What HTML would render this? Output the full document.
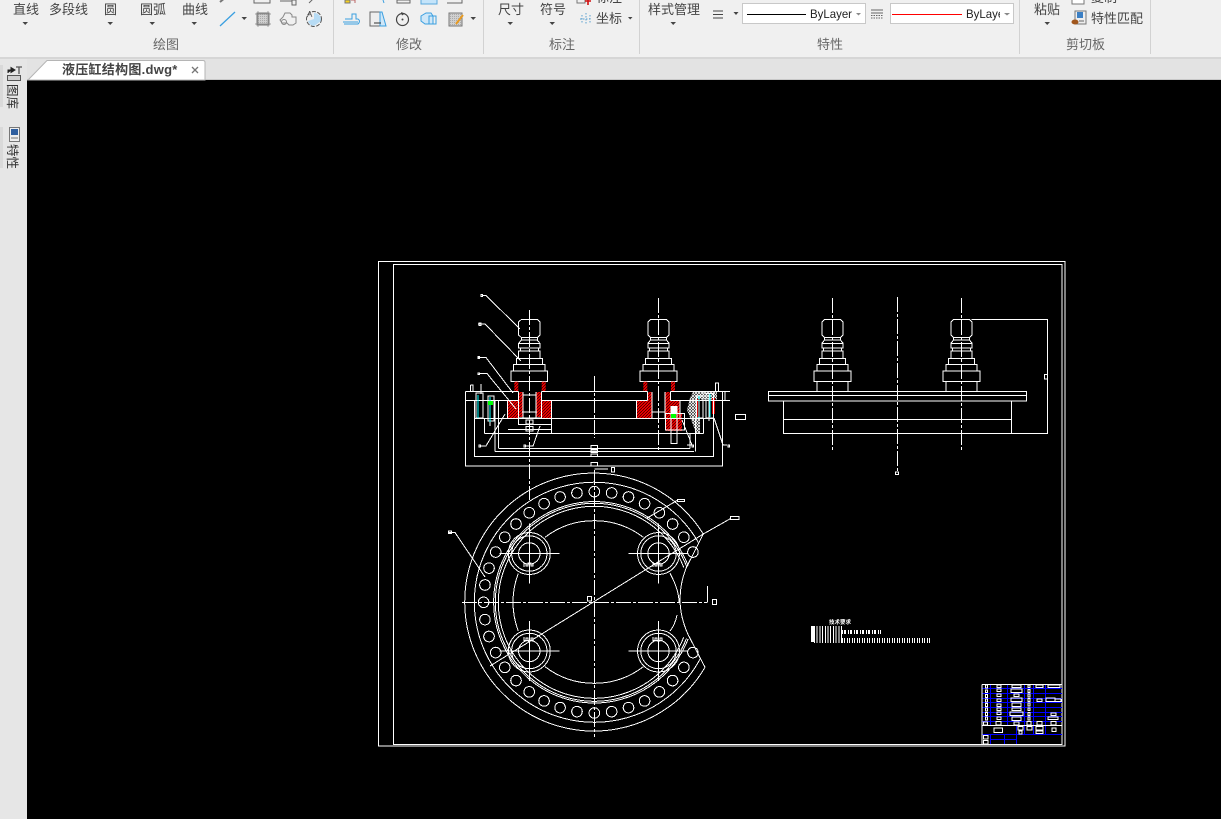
<!DOCTYPE html>
<html><head><meta charset="utf-8"><title>液压缸结构图.dwg</title>
<style>
html,body{margin:0;padding:0;background:#000;width:1221px;height:819px;overflow:hidden}
svg{display:block}
text{font-family:"Liberation Sans","Noto Sans CJK SC",sans-serif}
.l{font-size:13px;fill:#444}
.g{font-size:13px;fill:#666}
.d{stroke:#fff;fill:none;shape-rendering:crispEdges}
.c{stroke-dasharray:15 2 3 2}
.b{stroke:#00f;fill:none;shape-rendering:crispEdges}
.i{fill:none;stroke:#666;stroke-width:1}
.u{fill:none;stroke:#3a9fe0;stroke-width:1}
</style></head><body>
<svg width="1221" height="819" viewBox="0 0 1221 819" xmlns="http://www.w3.org/2000/svg">
<defs>
<pattern id="rh" width="3" height="3" patternUnits="userSpaceOnUse"><rect width="3" height="3" fill="#f00000"/><path d="M0 3L3 0" stroke="#000" stroke-width=".6"/></pattern>
<pattern id="wh" width="3" height="3" patternUnits="userSpaceOnUse"><rect width="3" height="3" fill="#000"/><path d="M0 3L3 0M0 0L3 3" stroke="#fff" stroke-width=".8"/></pattern>
<pattern id="gh" width="2" height="2" patternUnits="userSpaceOnUse"><rect width="2" height="2" fill="#d0d0d0"/><rect width="1" height="1" fill="#aaa"/></pattern>
<g id="knob" class="d">
<path d="M-8 319.5H8L10.7 322V335L8 337.5H-8L-10.7 335V322Z"/>
<path d="M-8 337.5V340H8V337.5M-8 340L-10.7 343.5M8 340L10.7 343.5"/>
<rect x="-10.7" y="343.5" width="21.4" height="4.5"/><path d="M-9 348V351M9 348V351"/>
<rect x="-10.7" y="351" width="21.4" height="7.5"/>
<rect x="-13" y="358.5" width="26" height="6"/>
<rect x="-15.7" y="364.5" width="31.4" height="6.5"/>
<rect x="-18.3" y="371" width="36.6" height="10.5"/>
</g>
<circle id="h" cx="594.3" cy="491.6" r="5.3" class="d"/>
<g id="bolt" class="d"><circle r="21"/><circle r="17.7"/><circle r="10.7"/><path d="M-30 0H30M0 -30V30"/></g>
</defs>

<!-- chrome -->
<rect width="1221" height="57" fill="#f0f0f0"/>
<rect y="57" width="1221" height="2" fill="#d6d6d6"/>
<rect y="59" width="1221" height="21" fill="#e3e3e3"/>
<rect y="79" width="1221" height="1" fill="#c8c8c8"/>
<rect y="59" width="27" height="760" fill="#e6e6e6"/>
<rect y="65" width="3" height="42" fill="#d9d9d9"/><rect y="127" width="3" height="41" fill="#d9d9d9"/>
<rect x="27" y="80" width="1194" height="739" fill="#000"/>
<g fill="#d2d2d2"><rect x="333" width="1" height="54"/><rect x="483" width="1" height="54"/><rect x="639" width="1" height="54"/><rect x="1019" width="1" height="54"/><rect x="1150" width="1" height="54"/></g>

<!-- tab -->
<path d="M28 80L47 60.5H203Q205 60.5 205 62.500V80Z" fill="#fff" stroke="#b5b5b5"/>
<text x="62" y="74" font-size="13" font-weight="bold" fill="#444" letter-spacing=".27">液压缸结构图.dwg*</text>
<path d="M192 67L198 73M198 67L192 73" stroke="#777" stroke-width="1.300"/>

<!-- ribbon text -->
<g class="l">
<text x="13" y="14">直线</text><text x="49" y="14">多段线</text><text x="104" y="14">圆</text><text x="140" y="14">圆弧</text><text x="182" y="14">曲线</text>
<text x="498" y="14">尺寸</text><text x="540" y="14">符号</text><text x="596" y="2">标注</text><text x="596" y="23">坐标</text>
<text x="648" y="14">样式管理</text><text x="1034" y="14">粘贴</text><text x="1091" y="2">复制</text><text x="1091" y="23">特性匹配</text>
</g>
<g class="g"><text x="153" y="49">绘图</text><text x="396" y="49">修改</text><text x="549" y="49">标注</text><text x="817" y="49">特性</text><text x="1066" y="49">剪切板</text></g>
<!-- arrows -->
<g fill="#444">
<path d="M22.500 22H28L25.200 25Z"/><path d="M107.500 22H113L110.200 25Z"/><path d="M149.500 22H155L152.200 25Z"/><path d="M191.500 22H197L194.200 25Z"/>
<path d="M241.500 17H247L244.200 20Z"/><path d="M470.500 17H476L473.200 20Z"/>
<path d="M507.500 22H513L510.200 25Z"/><path d="M549.500 22H555L552.200 25Z"/><path d="M628 17H632.500L630.200 19.500Z"/>
<path d="M670.500 22H676L673.200 25Z"/><path d="M733.500 12H738.500L736 15Z"/><path d="M1044.500 22H1050L1047.200 25Z"/>
</g>
<!-- draw icons -->
<path d="M220 26L235 12" stroke="#3a9fe0" stroke-width="1.300" fill="none"/>
<path d="M220 2L226 -3" stroke="#777" stroke-width="2"/>
<path d="M254 0V3H270V0" class="i"/>
<path d="M280 1H292V-2M292 0H296V5H292Z" class="i" fill="#b7d4ea"/>
<path d="M309 3L313 -1" class="i"/>
<rect x="257" y="13" width="12" height="12" fill="url(#gh)" stroke="#777"/>
<path d="M255 14H271M255 24H271M258 11V27M268 11V27" stroke="#888" stroke-width=".7"/>
<path d="M285 13H290L292 15V17H296V23L293 25H289L287 23H282L280 20L283 17Z" fill="none" stroke="#888"/><circle cx="284" cy="22" r="2.500" fill="none" stroke="#888"/>
<path d="M314 13A7 7 0 0 1 321 21L314 26A7 7 0 0 1 308 21L314 19Z" fill="#b7dcf5"/>
<circle cx="314" cy="19" r="7.500" fill="none" stroke="#555" stroke-dasharray="4 1.500"/>
<text x="307" y="17" font-size="8" fill="#444">A</text>
<!-- modify icons -->
<rect x="345" y="0" width="5" height="3" fill="#f5d020" stroke="#777"/><path d="M351 0H355V3" stroke="#b66" fill="none"/>
<path d="M383 0L384 3" stroke="#3a9fe0"/><path d="M397 0H410V3H397Z" class="i" fill="#c8d8e8"/>
<rect x="421" y="-3" width="16" height="7" fill="#c4e4fa" stroke="#5aa8dc"/><path d="M447 -3H462V3H447" class="i"/>
<path d="M343 22H358M345 19H352V14H356V19H358Q361 21 358 24H344" class="u"/>
<path d="M370 12H380V26H370Z" fill="#eee" stroke="#666"/><path d="M380 12H382L386 26H380Z" fill="#cfe7f8" stroke="#3a9fe0"/><path d="M374 23H381" stroke="#333"/>
<circle cx="402.500" cy="19.500" r="6" fill="none" stroke="#444" stroke-width="1.200"/><circle cx="402.500" cy="19.500" r="1" fill="#444"/><path d="M401 12L405 13.500L402 15.500Z" fill="#444"/>
<path d="M421 16L426 13H431L433 16V24H425L421 21Z" fill="#cfe7f8" stroke="#3a9fe0"/><rect x="429" y="16" width="7" height="8" fill="none" stroke="#3a9fe0"/>
<rect x="449" y="13" width="13" height="13" fill="url(#gh)" stroke="#777"/><path d="M456 24L463 15" stroke="#e89a20" stroke-width="2"/>
<!-- annotation icons -->
<rect x="577" y="-2" width="8" height="5" fill="none" stroke="#777"/><path d="M588 -2V5M585 1H591" stroke="#d01010" stroke-width="1.600"/>
<path d="M580 19H592M586 13V25M582 15V24M590 15V24" stroke="#5a9fd0" stroke-dasharray="1.500 1.500" fill="none"/>
<!-- layer -->
<path d="M713 11H723M713 14.500H723M713 18H723" stroke="#444"/>
<path d="M871 10H883M871 13H883" stroke="#666"/><path d="M871 15.500H883M871 18H883" stroke="#666" stroke-dasharray="1.500 1"/>
<rect x="742.500" y="3.500" width="123" height="20" fill="#fff" stroke="#c8c8c8"/>
<path d="M747 14.500H806" stroke="#000"/><text x="810" y="18" font-size="12" fill="#222" textLength="42" lengthAdjust="spacingAndGlyphs">ByLayer</text>
<path d="M856 13H861L858.500 15.500Z" fill="#888"/>
<rect x="890.500" y="3.500" width="123" height="20" fill="#fff" stroke="#c8c8c8"/>
<path d="M892 14.500H962" stroke="#f00"/>
<svg x="966" y="4" width="34" height="19" viewBox="0 0 34 19"><text x="0" y="14" font-size="12" fill="#222" textLength="42" lengthAdjust="spacingAndGlyphs">ByLayer</text></svg>
<path d="M1004 13H1010L1007 15.500Z" fill="#888"/>
<!-- clipboard icons -->
<path d="M1072 -2H1084V4H1072Z" fill="#fff" stroke="#777"/>
<rect x="1075" y="11" width="11" height="13" fill="#eee" stroke="#777"/><rect x="1077" y="12" width="6" height="6" fill="#3b7fc4"/>
<ellipse cx="1075" cy="22" rx="3.500" ry="2.500" fill="#a0561c"/><path d="M1079 21H1084" stroke="#666"/>

<!-- sidebar -->
<path d="M8 73V70H12M11 67.500L15 70L11 72.500Z" stroke="#222" fill="#222"/><path d="M16 67H22M19 67V74" stroke="#555" fill="none" stroke-width="1.300"/>
<rect x="7.500" y="75.500" width="13" height="5" fill="#d0d0d0" stroke="#555"/>
<text transform="translate(8 84) rotate(90)" font-size="12.500" fill="#333">图库</text>
<rect x="9.500" y="127.500" width="10" height="14" fill="#eee" stroke="#777"/><rect x="11" y="129" width="7" height="6" fill="#2f5f9f"/><path d="M11 138H18" stroke="#777"/>
<text transform="translate(8 144) rotate(90)" font-size="12.500" fill="#333">特性</text>

<!-- drawing frame -->
<rect x="378.500" y="261.500" width="686.500" height="484.500" class="d" stroke-width="1.300"/>
<rect x="393.500" y="264.500" width="668.500" height="480" class="d"/>

<!-- knobs -->
<use href="#knob" x="529.300"/><use href="#knob" x="658.500"/><use href="#knob" x="832.500"/><use href="#knob" x="961.500"/>

<!-- hatches -->
<g>
<rect x="507.700" y="401" width="10.700" height="17" fill="url(#rh)"/><rect x="541.700" y="401" width="10" height="17" fill="url(#rh)"/>
<rect x="636.700" y="401" width="15" height="17" fill="url(#rh)"/><rect x="665" y="401" width="15" height="17" fill="url(#rh)"/>
<rect x="519" y="392" width="4.300" height="25" fill="url(#rh)"/><rect x="536" y="392" width="5.700" height="25" fill="url(#rh)"/>
<rect x="648" y="392" width="4" height="9" fill="url(#rh)"/><rect x="665" y="392" width="5" height="9" fill="url(#rh)"/>
<rect x="514.300" y="381.700" width="4" height="9.700" fill="url(#rh)"/><rect x="541.700" y="381.700" width="4" height="9.700" fill="url(#rh)"/>
<rect x="643.300" y="381.700" width="4" height="9.700" fill="url(#rh)"/><rect x="671" y="381.700" width="4" height="9.700" fill="url(#rh)"/>
<rect x="666" y="414" width="16" height="17" fill="url(#rh)"/>
<path d="M690 398L693 392H700V433H696L692 422L687 410Z" fill="url(#wh)"/>
<rect x="693" y="391.500" width="24" height="8" fill="url(#wh)"/>
<rect x="712" y="398" width="3" height="16" fill="#d00"/><rect x="697" y="399" width="3" height="18" fill="#d00"/>
</g>

<!-- front view -->
<g class="d">
<path d="M465.500 391.500H518.500M541.500 391.500H647.500M670.500 391.500H730M465.500 400.500H518.500M541.500 400.500H647.500M670.500 400.500H730"/>
<path d="M465.500 391.500V466H722.500V391.500"/>
<path d="M474.500 400.500V456.500H713.500V400.500"/>
<path d="M474.500 418.500H713.500M484.500 433.500H703.500M499 448.500H690M495 451.500H694"/>
<path d="M484.500 418.500V433.500M495 400.500V451.500M498.500 400.500V448.500M690 433V448.500M695.500 418V451.500M703.500 418V433.500"/>
<path d="M470.500 385V391.500M470.500 385H473V391.500M715.500 383V391.500H718.500V383ZM725 391.500V400"/>
<path d="M507.700 401V418M551.700 401V433M636.700 401V418M680 401V418"/>
<path d="M518.500 391.500V424.500H551.500V418M541.500 391.500V418M523 392V418M536 392V418M523 395H536M522 412H537M518.500 418H541.500"/>
<path d="M647.500 391.500V400.500M670.500 391.500V400.500M652 392V418M665 392V418M652 412H665"/>
<rect x="526" y="420" width="7" height="4"/><rect x="526" y="426.500" width="7" height="4.500"/><path d="M508 429.500H551"/>
<rect x="665.500" y="413.500" width="19" height="16.500"/>
<rect x="671" y="406.500" width="6" height="37"/>
<rect x="591" y="445.500" width="6.500" height="4.500"/><rect x="591" y="449.500" width="6.500" height="3"/><rect x="591" y="454" width="6.500" height="2.500"/><rect x="591" y="462.500" width="6.500" height="3.500"/>
<rect x="735.500" y="414.500" width="10" height="5"/>
<path d="M476 393H483V418H476ZM488 396H494V421H488Z"/><path d="M481 384V394M490 420V426M703 417V391M709 394V421"/>
<path d="M696.500 396H703V418H696.500ZM706 393.500H713.500V418H706Z"/>
<!-- leaders -->
<path d="M482 295.500H486L520 329M478 324H485L521 361M478 357.500H486L513 393M479 373.500H487L516 409"/>
<path d="M480 446H486L505 414M525 446H533L540 426M687 445H692L682 420M727 445H723L714 418"/>
<rect x="481" y="294.500" width="1.500" height="2"/><rect x="479" y="323" width="2" height="2.500"/><rect x="478" y="356.500" width="1.500" height="2"/><rect x="478" y="373" width="1.500" height="1.500"/><rect x="479" y="445" width="1.500" height="2"/><rect x="524" y="445" width="1.500" height="2"/><rect x="692" y="445" width="1.500" height="2"/><rect x="728" y="445" width="1.500" height="2"/>
</g>
<g stroke="#0ff" fill="none" shape-rendering="crispEdges"><path d="M478 395V418M490 397V422M699 396V418M710 394V417"/></g>
<rect x="488" y="401" width="5" height="4" fill="#0f0"/><rect x="671" y="414" width="5" height="4" fill="#0f0"/>
<rect x="671" y="407" width="6" height="6" fill="#fff"/>

<!-- center lines -->
<g class="d c">
<path d="M529.500 310V500"/><path d="M658.500 298V452"/><path d="M594.500 376V438"/>
<path d="M832.500 298V452"/><path d="M961.500 298V452"/><path d="M897.500 297V472"/>
<path d="M594.500 470V737"/><path d="M462 602.500H707"/>
</g>

<!-- side view -->
<g class="d">
<path d="M817 381.500V391.500M848 381.500V391.500M946 381.500V391.500M977 381.500V391.500"/>
<rect x="768.500" y="391.500" width="258" height="9.500"/><path d="M768.500 395.500H1026.500"/>
<path d="M783.500 401V433.500H1011.500V401M783.500 419.500H1011.500"/>
<path d="M971.500 319.500H1047.500V433.500H1011.500"/>
<rect x="1044.500" y="374.500" width="3" height="4.500"/>
<rect x="895.500" y="472" width="3" height="2.500"/>
</g>

<!-- ring plan view -->
<g class="d">
<path d="M703.300 534A129 129 0 1 0 705 667.300"/>
<path d="M698.300 542.300A120 120 0 1 0 700.300 658.600"/>
<path d="M688.100 565.600A100.700 100.700 0 1 0 688.100 639"/>
<path d="M686.500 566.200A99 99 0 1 0 686.500 638.400"/>
<path d="M683.700 567.300A96 96 0 1 0 683.700 637.300"/>
<path d="M703.300 534L686 568.300Q673 602 688.300 635L705 667.300"/>
<path d="M670 573.300Q679 590 679 602"/>
<path d="M545 537.300A81 81 0 0 1 643.300 537.300M545 666.700A81 81 0 0 0 643.300 666.700"/>
<path d="M518.300 573.300A81 81 0 0 0 518.300 631M670 631Q675 625 677 615"/>
<path d="M490 666L703.300 534L730.700 518.500M646.700 518.300L677 500.500"/>
<path d="M448.500 532.500H455L485 577M594.500 469H608"/>
<path d="M707.500 586V602.500"/>
<rect x="448.500" y="531" width="3" height="2.500"/>
<rect x="611.500" y="467.500" width="3" height="4.500"/>
<rect x="677.500" y="499.500" width="7" height="2"/>
<rect x="730.500" y="516.500" width="8.500" height="3"/>
<rect x="712.500" y="599.500" width="4" height="5"/>
<rect x="587.500" y="596.500" width="4" height="4.500"/>
<path d="M524 567V563.500H526V566H528V563H531V566H533V563.500M653 567V563.500H655V566H657V563H660V566H662V563.500M524 637V640.500H526V638H528V641H531V638H533V640.500M653 637V640.500H655V638H657V641H660V638H662V640.500"/>
</g>
<use href="#bolt" x="529.300" y="553.500"/><use href="#bolt" x="658.500" y="553.500"/><use href="#bolt" x="529.300" y="651"/><use href="#bolt" x="658.500" y="651"/>
<use href="#h"/>
<use href="#h" transform="rotate(9 594.3 602.3)"/><use href="#h" transform="rotate(18 594.3 602.3)"/><use href="#h" transform="rotate(27 594.3 602.3)"/><use href="#h" transform="rotate(36 594.3 602.3)"/><use href="#h" transform="rotate(45 594.3 602.3)"/><use href="#h" transform="rotate(54 594.3 602.3)"/><use href="#h" transform="rotate(63 594.3 602.3)"/>
<use href="#h" transform="rotate(117 594.3 602.3)"/><use href="#h" transform="rotate(126 594.3 602.3)"/><use href="#h" transform="rotate(135 594.3 602.3)"/><use href="#h" transform="rotate(144 594.3 602.3)"/><use href="#h" transform="rotate(153 594.3 602.3)"/><use href="#h" transform="rotate(162 594.3 602.3)"/><use href="#h" transform="rotate(171 594.3 602.3)"/><use href="#h" transform="rotate(180 594.3 602.3)"/>
<use href="#h" transform="rotate(189 594.3 602.3)"/><use href="#h" transform="rotate(198 594.3 602.3)"/><use href="#h" transform="rotate(207 594.3 602.3)"/><use href="#h" transform="rotate(216 594.3 602.3)"/><use href="#h" transform="rotate(225 594.3 602.3)"/><use href="#h" transform="rotate(234 594.3 602.3)"/><use href="#h" transform="rotate(243 594.3 602.3)"/><use href="#h" transform="rotate(252 594.3 602.3)"/><use href="#h" transform="rotate(261 594.3 602.3)"/><use href="#h" transform="rotate(270 594.3 602.3)"/>
<use href="#h" transform="rotate(279 594.3 602.3)"/><use href="#h" transform="rotate(288 594.3 602.3)"/><use href="#h" transform="rotate(297 594.3 602.3)"/><use href="#h" transform="rotate(306 594.3 602.3)"/><use href="#h" transform="rotate(315 594.3 602.3)"/><use href="#h" transform="rotate(324 594.3 602.3)"/><use href="#h" transform="rotate(333 594.3 602.3)"/><use href="#h" transform="rotate(342 594.3 602.3)"/><use href="#h" transform="rotate(351 594.3 602.3)"/>

<!-- tiny notes -->
<text x="829" y="624" font-size="5.500" fill="#fff" font-weight="bold">技术要求</text>
<rect x="811" y="626" width="3" height="16" fill="#fff"/>
<g stroke="#fff" fill="none" shape-rendering="crispEdges">
<path d="M814 634.500H842" stroke-width="17" stroke-dasharray="1 1.700"/>
<path d="M842 632H881" stroke-width="4" stroke-dasharray="1 1 2 2"/>
<path d="M842 640.500H930" stroke-width="5" stroke-dasharray="1 1 1 2"/>
</g>

<!-- title block -->
<g class="b">
<path d="M982 688.500H1062M982 693.500H1062M982 698.500H1062M982 702.500H1062M982 707.500H1062M982 712.500H1062M982 716.500H1062M982 721.500H1062M982 734.500H1062M990 739.500H1016"/>
<path d="M990.500 684V725M1007.500 684V725M1024.500 684V734M1033.500 684V734M1045.500 684V734M990.500 734V744M1004.500 734V744M1016.500 725V744"/>
</g>
<g class="d">
<path d="M982 684.500H1062M982 684.500V744M982 725.500H1062"/>
<rect x="985.500" y="685" width="2" height="3"/><rect x="985.500" y="690" width="2" height="2.500"/><rect x="985.500" y="694.500" width="2" height="3"/><rect x="985.500" y="699" width="2" height="3"/><rect x="985.500" y="703.500" width="2" height="3"/><rect x="985.500" y="708" width="2" height="3"/><rect x="985.500" y="712.500" width="2" height="3"/><rect x="985.500" y="717" width="2" height="3"/><rect x="983.500" y="722" width="4" height="3"/>
<rect x="997" y="685" width="4" height="2.500"/><rect x="997" y="689" width="4" height="2.500"/><rect x="997" y="694" width="4" height="2.500"/><rect x="997" y="699" width="4" height="2.500"/><rect x="997" y="704" width="4" height="2.500"/><rect x="997" y="708" width="4" height="2.500"/><rect x="997" y="712" width="4" height="2.500"/><rect x="997" y="717" width="4" height="2.500"/><rect x="996" y="721.500" width="5" height="3.500"/>
<rect x="1012" y="685" width="9" height="2.500"/><rect x="1011" y="689" width="11" height="3.500"/><rect x="1014" y="694" width="5" height="2.500"/><rect x="1011" y="698" width="11" height="3.500"/><rect x="1012" y="703" width="9" height="3.500"/><rect x="1012" y="708" width="9" height="2.500"/><rect x="1010" y="712" width="13" height="3.500"/><rect x="1012" y="717" width="9" height="3.500"/><rect x="1014" y="722" width="5" height="3"/>
<rect x="1028" y="685" width="2" height="2.500"/><rect x="1028" y="689.500" width="2" height="3"/><rect x="1028" y="694" width="2" height="3"/><rect x="1028" y="698.500" width="2" height="3"/><rect x="1028" y="703" width="2" height="3"/><rect x="1028" y="708" width="2" height="2.500"/><rect x="1028" y="712.500" width="2" height="3"/><rect x="1028" y="717" width="2" height="3"/><rect x="1027" y="721.500" width="4" height="3.500"/>
<rect x="1036" y="685" width="7" height="2.500"/><rect x="1037" y="699" width="5" height="2.500"/><rect x="1037" y="721.500" width="5" height="3.500"/>
<rect x="1048" y="685" width="12" height="2.500"/><rect x="1046" y="698" width="9" height="3.500"/><rect x="1055" y="699" width="6" height="2.500"/><rect x="1051" y="713" width="5" height="2.500"/><rect x="1048" y="717" width="10" height="2.500"/><rect x="1051" y="721.500" width="5" height="3.500"/>
<rect x="994" y="728" width="8.500" height="4.500"/><rect x="1018" y="726.500" width="5" height="3.500"/><rect x="1019" y="731" width="3" height="3"/><rect x="1027" y="726.500" width="5" height="3.500"/><rect x="1036" y="726.500" width="7" height="3.500"/><rect x="1036" y="731" width="7" height="2.500"/><rect x="1052" y="728" width="4" height="3.500"/>
<rect x="983.500" y="735.500" width="4.500" height="3.500"/><rect x="983.500" y="740.500" width="4.500" height="3.500"/>
</g>
</svg>
</body></html>
